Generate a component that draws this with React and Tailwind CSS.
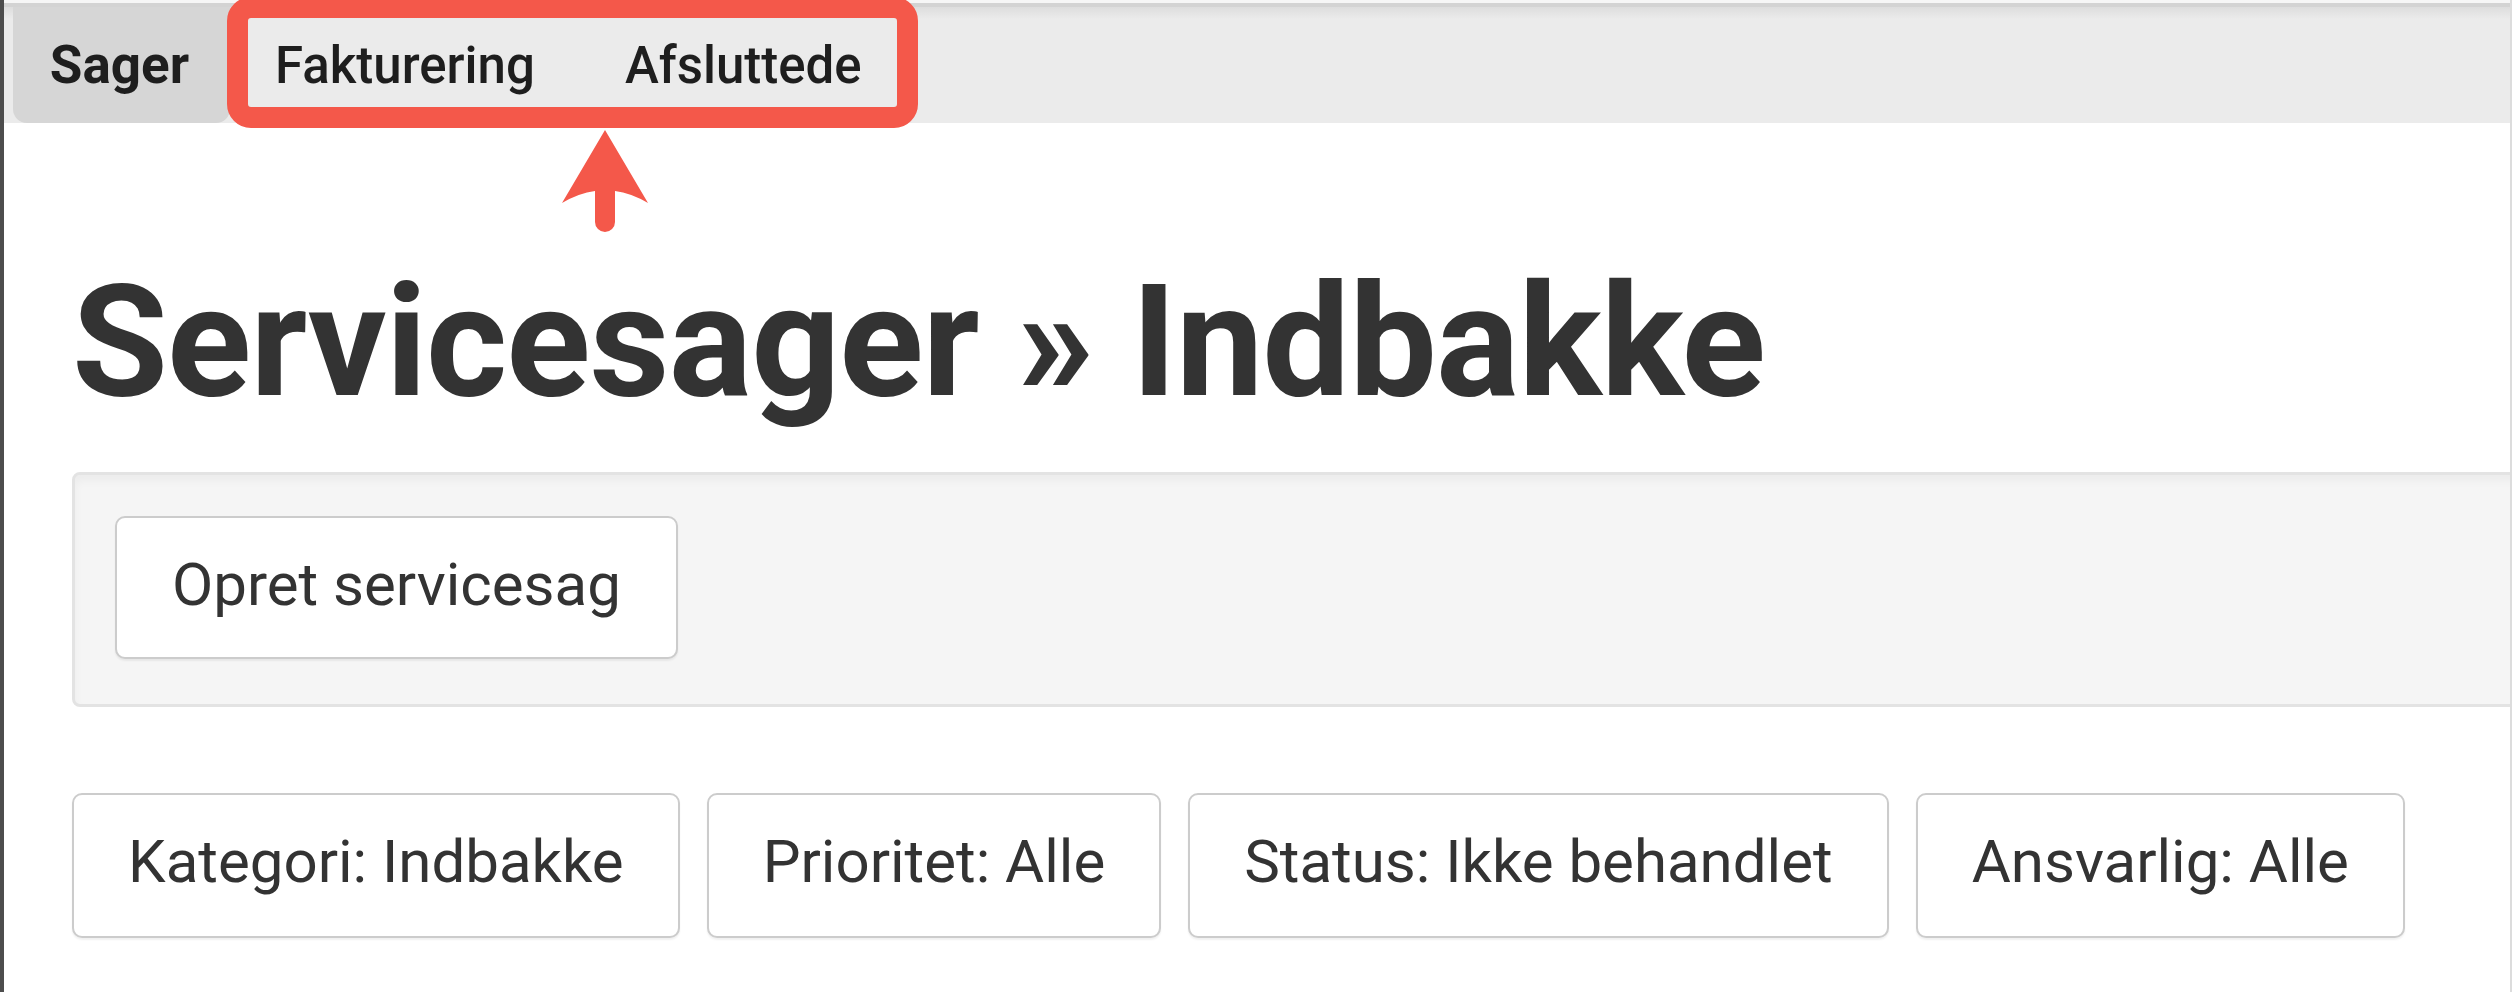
export default function App() {
  const filters = [
    "Kategori: Indbakke",
    "Prioritet: Alle",
    "Status: Ikke behandlet",
    "Ansvarlig: Alle",
  ];
  return (
    <div className="relative w-[2512px] h-[992px] overflow-hidden bg-white border-l-[4px] border-l-[#4d4d4d] border-r-2 border-r-[#dcdcdc] font-['Roboto',sans-serif] text-[#333]">
      {/* top nav */}
      <div className="pt-[3px] bg-[#f6f6f6]">
        <div className="flex h-[120px] pl-[9px] border-t-[4px] border-t-[#d3d3d3] bg-[linear-gradient(to_bottom,#dddddd,#ebebeb_12px)]">
          <div className="flex items-center justify-center w-[217px] bg-[#d6d6d6] rounded-b-[14px] text-[53px] leading-none font-bold text-[#1e1e1e] pr-[4px]">
            Sager
          </div>
          <div className="flex items-center px-[45px] text-[51px] leading-none font-medium text-[#1e1e1e]">
            Fakturering
          </div>
          <div className="flex items-center px-[45px] text-[51px] leading-none font-medium text-[#1e1e1e]">
            Afsluttede
          </div>
        </div>
      </div>

      {/* annotation: red rectangle */}
      <div className="absolute left-[223px] top-[-3px] w-[691px] h-[131px] border-[21px] border-[#f4584a] rounded-[24px]" />
      {/* annotation: arrow */}
      <svg className="absolute left-[551px] top-[120px]" width="110" height="120" viewBox="551 120 110 120">
        <path
          d="M601 130 L644 203 Q627 193 611 191 L611 222 A10 10 0 0 1 591 222 L591 191 Q575 193 558 203 Z"
          fill="#f4584a"
        />
      </svg>

      {/* content */}
      <div className="pl-[68px]">
        <h1 className="mt-[141px] text-[156px] leading-none font-bold text-[#333] tracking-[-1px]">
          Servicesager » Indbakke
        </h1>

        <div className="mt-[52px] -mr-[40px] h-[235px] pt-[41px] pl-[40px] bg-[#f5f5f5] border-[3px] border-[#e3e3e3] rounded-l-[8px] shadow-[inset_0_6px_8px_rgba(0,0,0,0.04)]">
          <button className="flex items-center h-[143px] px-[55px] pb-[6px] bg-white border-2 border-[#cccccc] rounded-[10px] text-[60px] leading-none text-[#333] shadow-[0_2px_2px_rgba(0,0,0,0.06)]">
            Opret servicesag
          </button>
        </div>

        <div className="mt-[86px] flex gap-[27px]">
          {filters.map((f) => (
            <button
              key={f}
              className="flex items-center h-[145px] px-[54px] pb-[8px] bg-white border-2 border-[#cccccc] rounded-[10px] text-[60px] leading-none text-[#333] shadow-[0_2px_2px_rgba(0,0,0,0.06)]"
            >
              {f}
            </button>
          ))}
        </div>
      </div>
    </div>
  );
}
